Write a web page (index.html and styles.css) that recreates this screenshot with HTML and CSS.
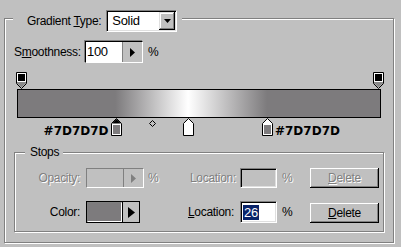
FILE: index.html
```html
<!DOCTYPE html>
<html lang="en">
<head>
    <meta charset="UTF-8">
    <title>Gradient Editor</title>
    <link rel="stylesheet" href="styles.css">
</head>
<body>
    <div class="ge_group">
        <div class="ge_group_head">
            <span class="ge_label">Gradient <u>T</u>ype:</span>
            <div class="ge_select ge_sunken">
                <span class="ge_select_value">Solid</span>
                <span class="ge_select_btn ge_raised">
                    <svg width="7" height="4" viewBox="0 0 7 4"><path d="M0 0H7L3.5 4Z" fill="#000"/></svg>
                </span>
            </div>
        </div>

        <div class="ge_smooth_row">
            <span class="ge_label ge_smooth_label">S<u>m</u>oothness:</span>
            <div class="ge_spin">
                <span class="ge_spin_value">100</span>
                <span class="ge_spin_btn">
                    <svg width="5" height="9" viewBox="0 0 5 9"><path d="M0 0L5 4.5L0 9Z" fill="#000"/></svg>
                </span>
            </div>
            <span class="ge_pct">%</span>
        </div>

        <div class="ge_editor">
            <div class="ge_stops_top">
                <div class="ge_track">
                    <span class="ge_stop" style="left: 0%">
                        <svg width="11" height="17" viewBox="0 0 11 17">
                            <path d="M0.5 0.5H10.5V11.5L5.5 16.5L0.5 11.5Z" fill="#fff" stroke="#000"/>
                            <rect x="2" y="2" width="7" height="7" fill="#000"/>
                            <path d="M1 10H10V11.3L5.5 15.8L1 11.3Z" fill="#8a8a8a"/>
                        </svg>
                    </span>
                    <span class="ge_stop" style="left: 100%">
                        <svg width="11" height="17" viewBox="0 0 11 17">
                            <path d="M0.5 0.5H10.5V11.5L5.5 16.5L0.5 11.5Z" fill="#fff" stroke="#000"/>
                            <rect x="2" y="2" width="7" height="7" fill="#000"/>
                            <path d="M1 10H10V11.3L5.5 15.8L1 11.3Z" fill="#8a8a8a"/>
                        </svg>
                    </span>
                </div>
            </div>

            <div class="ge_bar"></div>

            <div class="ge_stops_bottom">
                <div class="ge_track">
                    <span class="ge_stop" style="left: 26.5%">
                        <span class="ge_hex ge_hex_left">#7D7D7D</span>
                        <svg width="11" height="18" viewBox="0 0 11 18">
                            <path d="M0.5 17.5V5.5L5.5 0.5L10.5 5.5V17.5Z" fill="#fff" stroke="#000"/>
                            <path d="M5.5 1L10 5.5H1Z" fill="#000"/>
                            <rect x="2" y="7" width="7" height="9" fill="#7d7b7d"/>
                        </svg>
                    </span>
                    <span class="ge_mid" style="left: 36.7%">
                        <svg width="7" height="7" viewBox="0 0 7 7"><path d="M3.5 0.5L6.5 3.5L3.5 6.5L0.5 3.5Z" fill="none" stroke="#000"/></svg>
                    </span>
                    <span class="ge_stop" style="left: 46.8%">
                        <svg width="11" height="18" viewBox="0 0 11 18">
                            <path d="M0.5 17.5V5.5L5.5 0.5L10.5 5.5V17.5Z" fill="#fff" stroke="#000"/>
                            <rect x="2" y="7" width="7" height="9" fill="#fff"/>
                        </svg>
                    </span>
                    <span class="ge_stop" style="left: 68.9%">
                        <svg width="11" height="18" viewBox="0 0 11 18">
                            <path d="M0.5 17.5V5.5L5.5 0.5L10.5 5.5V17.5Z" fill="#fff" stroke="#000"/>
                            <rect x="2" y="7" width="7" height="9" fill="#7d7b7d"/>
                        </svg>
                        <span class="ge_hex ge_hex_right">#7D7D7D</span>
                    </span>
                </div>
            </div>
        </div>

        <div class="ge_stops_group">
            <div class="ge_stops_title">Stops</div>
            <div class="ge_stops_grid">
                <span class="ge_label ge_grid_label ge_disabled">Opacity:</span>
                <div class="ge_spin ge_spin_off">
                    <span class="ge_spin_value"></span>
                    <span class="ge_spin_btn">
                        <svg width="5" height="9" viewBox="0 0 5 9"><path d="M0 0L5 4.5L0 9Z" fill="#808080"/></svg>
                    </span>
                </div>
                <span class="ge_pct ge_disabled">%</span>
                <span class="ge_label ge_grid_label ge_disabled">Location:</span>
                <div class="ge_field ge_sunken ge_field_off"></div>
                <span class="ge_pct ge_disabled">%</span>
                <button class="ge_btn ge_btn_off"><u>D</u>elete</button>

                <span class="ge_label ge_grid_label">Color:</span>
                <div class="ge_color">
                    <span class="ge_swatch"></span>
                    <span class="ge_color_btn">
                        <svg width="7" height="11" viewBox="0 0 7 11"><path d="M0 0L7 5.5L0 11Z" fill="#000"/></svg>
                    </span>
                </div>
                <span></span>
                <span class="ge_label ge_grid_label"><u>L</u>ocation:</span>
                <div class="ge_field ge_sunken"><span class="ge_selected">26</span></div>
                <span class="ge_pct">%</span>
                <button class="ge_btn ge_btn_row2"><u>D</u>elete</button>
            </div>
        </div>
    </div>
</body>
</html>
```

FILE: styles.css
```css
* {
    margin: 0;
    padding: 0;
    box-sizing: border-box;
}

body {
    font-family: "Liberation Sans", Arial, sans-serif;
    font-size: 12px;
    letter-spacing: -0.3px;
    background-color: #c0c0c0;
    color: #000;
    width: 401px;
    height: 247px;
    overflow: hidden;
    padding: 18px 0 0 4px;
}

u {
    text-decoration: underline;
    text-underline-offset: 1px;
}

/* etched group boxes */
.ge_group {
    width: 390px;
    height: 225px;
    border: 1px solid #808080;
    box-shadow: 1px 1px 0 #fff, inset 1px 1px 0 #fff;
}

.ge_group_head {
    display: flex;
    align-items: center;
    gap: 4px;
    width: fit-content;
    height: 22px;
    margin: -9px 0 0 8px;
    padding: 0 5px 0 14px;
    background: #c0c0c0;
}

.ge_sunken {
    border: 1px solid;
    border-color: #808080 #fff #fff #808080;
    box-shadow: inset 1px 1px 0 #000, inset -1px -1px 0 #dfdfdf;
    padding: 1px;
}

.ge_raised {
    background: #c0c0c0;
    box-shadow: inset -1px -1px 0 #000, inset 1px 1px 0 #dfdfdf, inset -2px -2px 0 #808080, inset 2px 2px 0 #fff;
}

.ge_select {
    display: flex;
    width: 71px;
    height: 22px;
    margin-left: 1px;
    background: #fff;
}

.ge_select_value {
    flex: 1;
    line-height: 18px;
    padding-left: 4px;
    font-size: 13px;
}

.ge_select_btn {
    width: 16px;
    height: 18px;
    display: flex;
    align-items: center;
    justify-content: center;
}

.ge_smooth_row {
    display: flex;
    align-items: center;
    height: 22px;
    margin: 9px 0 0 9px;
}

.ge_smooth_label {
    width: 71px;
}

.ge_spin {
    display: flex;
    width: 58px;
    height: 22px;
    border: 1px solid #000;
    border-right-color: #fff;
    border-bottom-color: #fff;
    box-shadow: -1px -1px 0 #808080;
    background: #fff;
}

.ge_spin_value {
    flex: 1;
    line-height: 20px;
    padding-left: 1px;
    font-size: 13px;
}

.ge_spin_btn {
    width: 20px;
    display: flex;
    align-items: center;
    justify-content: center;
    border-left: 1px solid #808080;
    background: #c0c0c0;
}

.ge_pct {
    padding-left: 5px;
}

/* gradient editor */
.ge_editor {
    width: 364px;
    margin: 9px 0 0 12px;
}

.ge_stops_top {
    position: relative;
    height: 17px;
}

.ge_track {
    position: absolute;
    top: 0;
    bottom: 0;
    left: 4px;
    right: 3px;
}

.ge_stop {
    position: absolute;
    top: 0;
    margin-left: -5px;
    display: block;
    line-height: 0;
}

.ge_mid {
    position: absolute;
    top: 2px;
    margin-left: -3px;
    line-height: 0;
}

.ge_bar {
    height: 29px;
    border: 1px solid #000;
    background: linear-gradient(to right, #7d7b7d 0%, #7d7b7d 26.9%, #fff 47%, #7d7b7d 68.8%, #7d7b7d 100%);
}

.ge_stops_bottom {
    position: relative;
    height: 22px;
}

.ge_hex {
    position: absolute;
    top: 7px;
    font-family: "DejaVu Sans", sans-serif;
    font-weight: bold;
    font-size: 12px;
    line-height: 12px;
    letter-spacing: 0;
    color: #000;
}

.ge_hex_left {
    right: 13px;
}

.ge_hex_right {
    left: 13px;
}

/* stops group */
.ge_stops_group {
    width: 370px;
    height: 80px;
    margin: 12px 0 0 9px;
    border: 1px solid #808080;
    box-shadow: 1px 1px 0 #fff, inset 1px 1px 0 #fff;
}

.ge_stops_title {
    width: fit-content;
    margin: -8px 0 0 10px;
    padding: 0 4px 0 5px;
    line-height: 14px;
    background: #c0c0c0;
}

.ge_stops_grid {
    display: grid;
    grid-template-columns: 71px 57px 37px 60px 37px 33px 69px;
    grid-template-rows: 20px 22px;
    row-gap: 13px;
    align-items: center;
    margin-top: 9px;
}

.ge_grid_label {
    text-align: right;
    padding-right: 6px;
}

.ge_grid_label:nth-child(4),
.ge_grid_label:nth-child(12) {
    padding-right: 4px;
}

.ge_disabled {
    color: #808080;
    text-shadow: 1px 1px 0 #fff;
}

.ge_spin_off {
    height: 20px;
    background: #c0c0c0;
    border-color: #808080;
    border-right-color: #fff;
    border-bottom-color: #fff;
    box-shadow: none;
}

.ge_spin_off .ge_spin_btn {
    border-left-color: #808080;
}

.ge_field {
    height: 22px;
    background: #fff;
    display: flex;
    align-items: center;
    padding-left: 2px;
}

.ge_field_off {
    height: 20px;
    background: #c0c0c0;
}

.ge_selected {
    background: #0a246a;
    color: #fff;
    font-size: 13px;
    line-height: 15px;
    padding: 0 1px;
}

.ge_color {
    display: flex;
    width: 54px;
    height: 22px;
    border: 1px solid #000;
}

.ge_swatch {
    flex: 1;
    background: #7d7b7d;
    border: 1px solid;
    border-color: #808080 #fff #fff #808080;
}

.ge_color_btn {
    width: 17px;
    display: flex;
    align-items: center;
    justify-content: center;
    border-left: 1px solid #000;
    background: #c0c0c0;
}

.ge_btn {
    font-family: inherit;
    font-size: 12px;
    letter-spacing: inherit;
    width: 69px;
    height: 20px;
    border: none;
    background: #c0c0c0;
    box-shadow: inset -1px -1px 0 #000, inset 1px 1px 0 #fff, inset -2px -2px 0 #808080;
}

.ge_btn_off {
    color: #808080;
    text-shadow: 1px 1px 0 #fff;
}

.ge_btn_row2 {
    align-self: end;
}
```
